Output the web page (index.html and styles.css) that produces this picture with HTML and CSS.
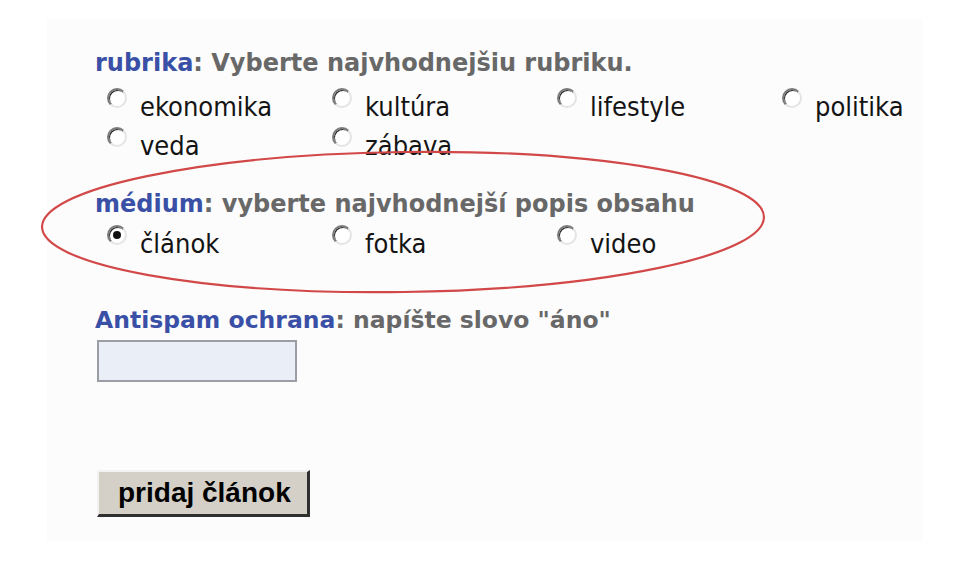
FILE: index.html
```html
<!DOCTYPE html>
<html lang="sk">
<head>
<meta charset="utf-8">
<title>Pridať článok</title>
<link rel="stylesheet" href="styles.css">
</head>
<body>
<div class="panel">
  <form class="form">
    <div class="label"><span class="key">rubrika</span><span class="hint">: Vyberte najvhodnejšiu rubriku.</span></div>
    <div class="options">
      <label class="opt"><input type="radio" name="rubrika"><span>ekonomika</span></label>
      <label class="opt"><input type="radio" name="rubrika"><span>kultúra</span></label>
      <label class="opt"><input type="radio" name="rubrika"><span>lifestyle</span></label>
      <label class="opt"><input type="radio" name="rubrika"><span>politika</span></label>
      <label class="opt"><input type="radio" name="rubrika"><span>veda</span></label>
      <label class="opt"><input type="radio" name="rubrika"><span>zábava</span></label>
    </div>

    <div class="label label-medium"><span class="key">médium</span><span class="hint">: vyberte najvhodnejší popis obsahu</span></div>
    <div class="options options-medium">
      <label class="opt"><input type="radio" name="medium" checked><span>článok</span></label>
      <label class="opt"><input type="radio" name="medium"><span>fotka</span></label>
      <label class="opt"><input type="radio" name="medium"><span>video</span></label>
    </div>

    <div class="label label-spam"><span class="key">Antispam ochrana</span><span class="hint">: napíšte slovo "áno"</span></div>
    <input class="spam-input" type="text">

    <button class="submit" type="button">pridaj článok</button>
  </form>
</div>

<svg class="mark" width="969" height="586" viewBox="0 0 969 586" aria-hidden="true">
  <ellipse cx="403" cy="222" rx="361" ry="70" transform="rotate(-0.8 403 222)" fill="none" stroke="#d24848" stroke-width="2.2"/>
</svg>
</body>
</html>
```

FILE: styles.css
```css
html, body {
  margin: 0;
  padding: 0;
  background: #ffffff;
}

body {
  width: 969px;
  height: 586px;
  overflow: hidden;
  position: relative;
}

.panel {
  margin: 18px 0 0 47px;
  width: 875px;
  height: 524px;
  box-sizing: border-box;
  padding: 30px 0 0 48px;
  background: #fcfcfc;
}

.form {
  display: flex;
  flex-direction: column;
  align-items: flex-start;
}

.label {
  font-family: "DejaVu Sans", Verdana, sans-serif;
  font-weight: bold;
  font-size: 24px;
  line-height: 30px;
  letter-spacing: 0;
  white-space: nowrap;
}

.key {
  color: #3a50a6;
}

.hint {
  color: #686868;
}

.options {
  display: grid;
  grid-template-columns: repeat(4, 225px);
  grid-auto-rows: 39px;
  margin: 9px 0 0 12px;
}

.opt {
  display: flex;
  align-items: flex-start;
  gap: 13px;
  font-family: "DejaVu Sans Condensed", "DejaVu Sans", sans-serif;
  font-stretch: condensed;
  font-size: 27px;
  line-height: 39px;
  color: #141414;
  white-space: nowrap;
}

.opt input {
  appearance: none;
  -webkit-appearance: none;
  flex: none;
  width: 20px;
  height: 20px;
  margin: 1px 0 0 0;
  box-sizing: border-box;
  border-radius: 50%;
  border: 2px solid;
  border-color: #7a7a7a #e4e4e4 #e4e4e4 #7a7a7a;
  box-shadow: inset 1px 1px 0 #2e2e2e;
  background: #ffffff;
  position: relative;
}

.opt input:checked::after {
  content: "";
  position: absolute;
  left: 4px;
  top: 4px;
  width: 8px;
  height: 8px;
  border-radius: 50%;
  background: #111111;
}

.label-medium {
  margin-top: 24px;
}

.options-medium {
  margin-top: 5px;
}

.label-spam {
  margin-top: 42px;
  font-size: 23.5px;
}

.spam-input {
  margin: 5px 0 0 2px;
  width: 200px;
  height: 42px;
  box-sizing: border-box;
  border: 2px solid #9a9ea4;
  background: #e9eef7;
  padding: 0;
}

.submit {
  margin: 88px 0 0 2px;
  width: 213px;
  height: 47px;
  box-sizing: border-box;
  padding: 0 0 0 19px;
  text-align: left;
  font-family: "Liberation Sans", Arial, sans-serif;
  font-weight: bold;
  font-size: 28px;
  color: #000000;
  background: #d4d0c8;
  border-style: solid;
  border-width: 2px 3px 3px 2px;
  border-color: #f2f2f2 #303030 #303030 #f2f2f2;
}

.mark {
  position: absolute;
  left: 0;
  top: 0;
  pointer-events: none;
}
```
